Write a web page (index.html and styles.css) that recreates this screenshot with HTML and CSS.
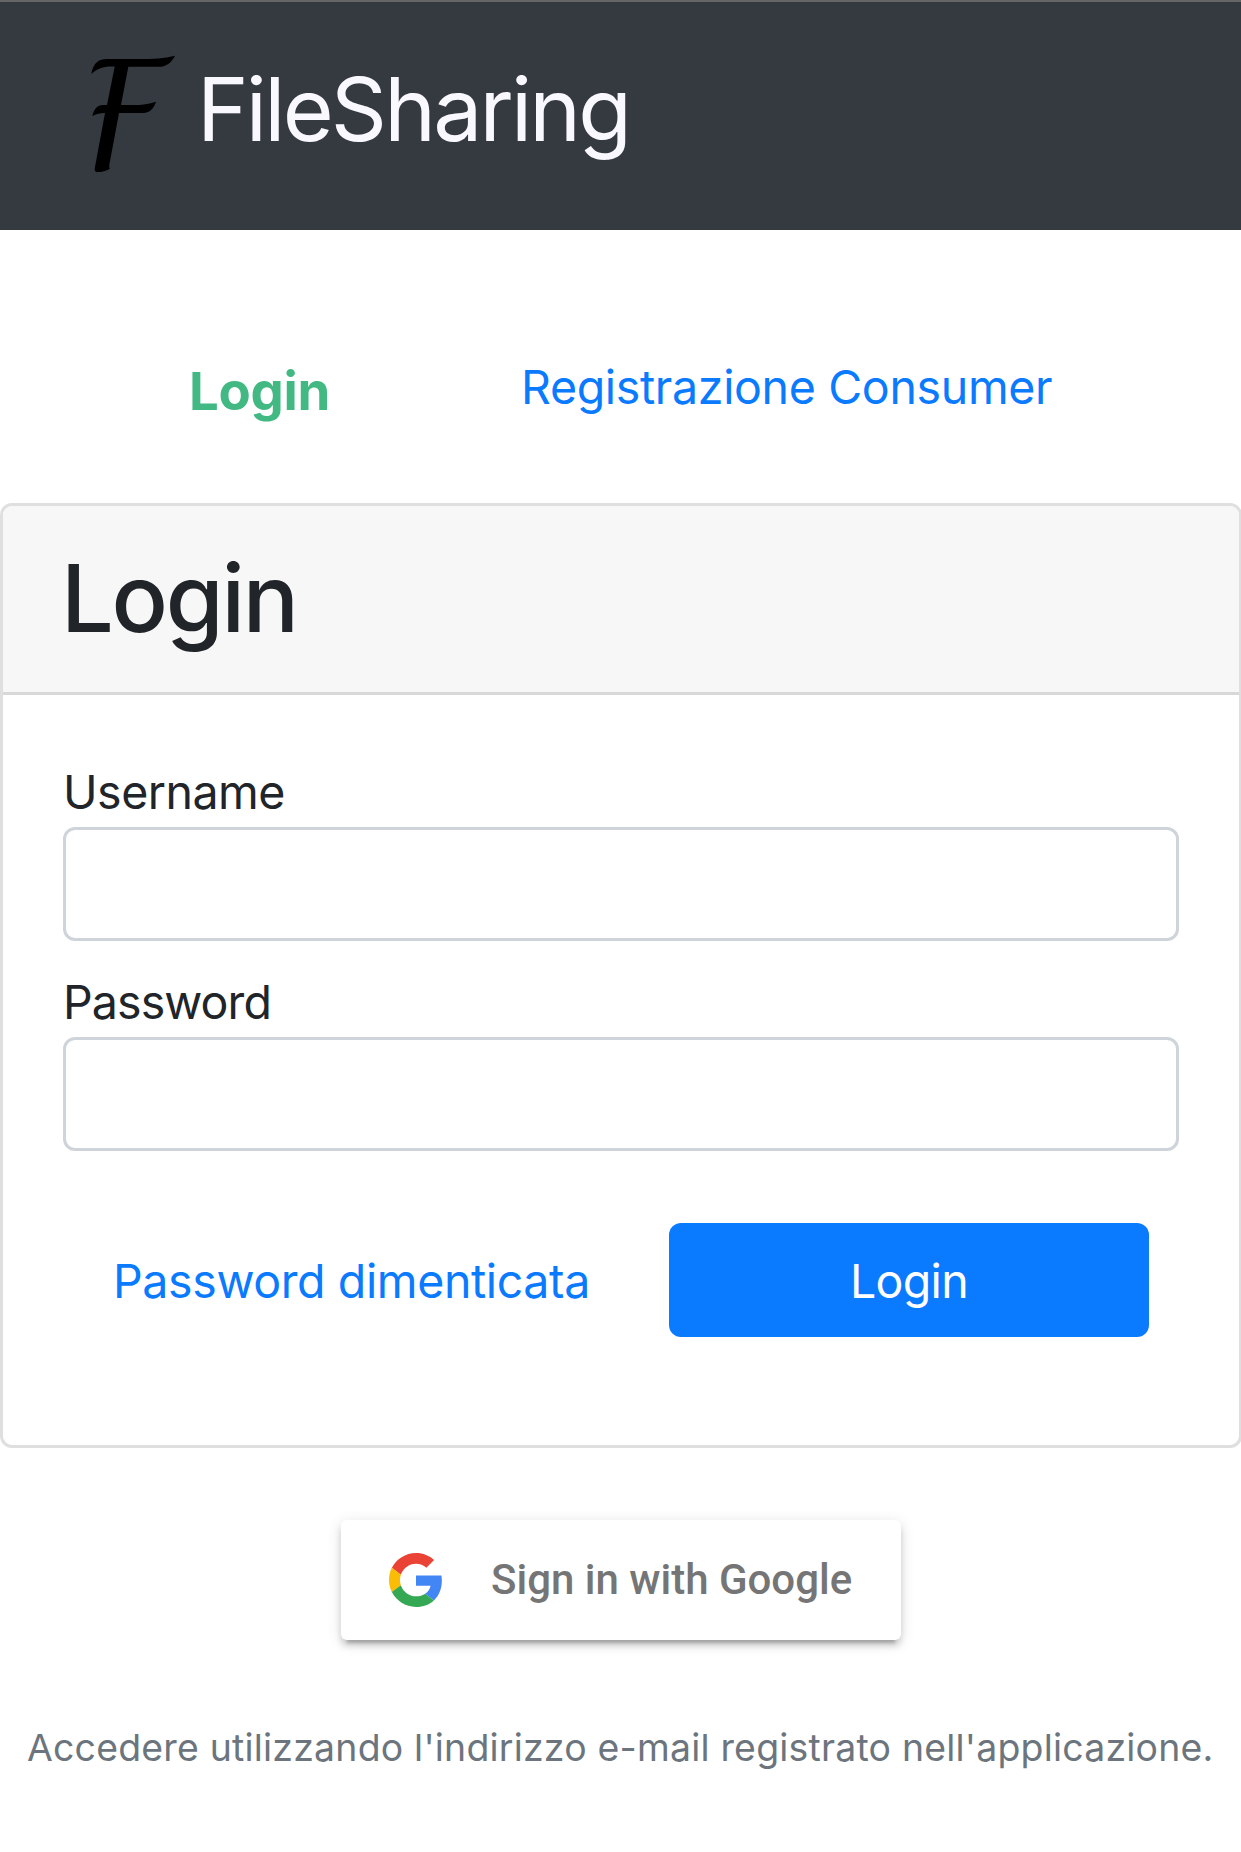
FILE: index.html
```html
<!DOCTYPE html>
<html lang="it">
<head>
<meta charset="utf-8">
<title>FileSharing</title>
<link rel="stylesheet" href="styles.css">
</head>
<body>
<header class="navbar">
  <svg class="logo" viewBox="0 0 330 450" aria-hidden="true">
    <path d="M34 102C39 76 50 60 72 58C86 56 105 57 128 57H180C218 57 252 55 285 47C277 63 264 77 244 80H145L123 195H160C186 195 208 192 228 185C223 200 214 217 192 219H117L88 374C87 379 88 383 90 386C77 393 62 397 49 396C43 394 44 388 45 381L75 219C60 219 48 222 37 228C42 211 49 198 62 196C68 195 74 195 81 195L104 80C79 79 54 83 34 102Z"/>
  </svg>
  <span class="brand">FileSharing</span>
</header>
<nav class="tabs">
  <a class="tab tab-active">Login</a>
  <a class="tab tab-link">Registrazione Consumer</a>
</nav>
<main class="card">
  <div class="card-header"><h1 class="title">Login</h1></div>
  <form class="card-body">
    <label class="label" for="username">Username</label>
    <input class="input" id="username" type="text">
    <label class="label label-password" for="password">Password</label>
    <input class="input" id="password" type="password">
    <div class="actions">
      <a class="forgot">Password dimenticata</a>
      <button class="submit" type="button">Login</button>
    </div>
  </form>
</main>
<button class="google" type="button">
  <svg class="google-icon" viewBox="0 0 48 48" aria-hidden="true">
    <path fill="#EA4335" d="M24 9.5c3.54 0 6.71 1.22 9.21 3.6l6.85-6.85C35.9 2.38 30.47 0 24 0 14.62 0 6.51 5.38 2.56 13.22l7.98 6.19C12.43 13.72 17.74 9.5 24 9.5z"/>
    <path fill="#4285F4" d="M46.98 24.55c0-1.57-.15-3.09-.38-4.55H24v9.02h12.94c-.58 2.96-2.26 5.48-4.78 7.18l7.73 6c4.51-4.18 7.09-10.36 7.09-17.65z"/>
    <path fill="#FBBC05" d="M10.53 28.59c-.48-1.45-.76-2.99-.76-4.59s.27-3.14.76-4.59l-7.98-6.19C.92 16.46 0 20.12 0 24c0 3.88.92 7.54 2.56 10.78l7.97-6.19z"/>
    <path fill="#34A853" d="M24 48c6.48 0 11.93-2.13 15.89-5.81l-7.73-6c-2.15 1.45-4.92 2.3-8.16 2.3-6.26 0-11.57-4.22-13.47-9.91l-7.98 6.19C6.51 42.62 14.62 48 24 48z"/>
  </svg>
  <span class="google-text">Sign in with Google</span>
</button>
<p class="hint">Accedere utilizzando l'indirizzo e-mail registrato nell'applicazione.</p>
</body>
</html>
```
FILE: styles.css
```css
* { box-sizing: border-box; }
body {
  margin: 0;
  height: 1852px;
  overflow: hidden;
  background: #fff;
  color: #212529;
  font-family: Inter, "Liberation Sans", sans-serif;
  font-size: 46.5px;
}
.navbar {
  display: flex;
  align-items: flex-start;
  height: 230px;
  padding: 38px 0 0 80px;
  background: #343a40;
  border-top: 2px solid #666;
}
.logo { width: 110px; height: 150px; flex: none; }
.brand {
  margin-left: 7px;
  color: #f9f8ff;
  font-size: 87.5px;
  line-height: 138px;
  letter-spacing: -2.8px;
  white-space: nowrap;
}
.tabs {
  display: flex;
  align-items: flex-start;
  height: 273px;
  padding-top: 121px;
}
.tab { line-height: 72px; white-space: nowrap; }
.tab-active {
  width: 521px;
  padding: 4px 0 0 189px;
  color: #42b983;
  font-size: 52.7px;
  font-weight: 700;
  letter-spacing: -0.3px;
}
.tab-link { color: #0a7aff; letter-spacing: -0.34px; }
.card {
  width: 1242px;
  height: 945px;
  border: 3px solid #dfdfdf;
  border-radius: 12px;
  overflow: hidden;
}
.card-header {
  height: 189px;
  padding: 36px 58px;
  background: #f7f7f7;
  border-bottom: 3px solid #d8d8d8;
}
.title {
  margin: 0;
  font-size: 93.5px;
  font-weight: 500;
  line-height: 112px;
  letter-spacing: -2.3px;
}
.card-body { padding: 60px; }
.label { display: block; height: 72px; line-height: 74px; letter-spacing: -0.5px; }
.label-password { letter-spacing: -0.9px; }
.input {
  display: block;
  width: 1116px;
  height: 114px;
  margin: 0 0 24px;
  padding: 18px 36px;
  border: 3px solid #ced4da;
  border-radius: 12px;
  background: #fff;
  font: inherit;
}
.actions {
  display: flex;
  align-items: center;
  margin-top: 72px;
  height: 114px;
  padding-left: 50px;
}
.forgot { width: 556px; padding-top: 2px; color: #0a7aff; letter-spacing: -0.38px; white-space: nowrap; }
.submit {
  width: 480px;
  height: 114px;
  padding: 2px 0 0;
  border: 0;
  border-radius: 12px;
  background: #0a7aff;
  color: #fff;
  font: inherit;
  letter-spacing: -0.7px;
}
.google {
  display: flex;
  align-items: center;
  width: 560px;
  height: 120px;
  margin: 72px 0 0 341px;
  padding: 0 0 0 48px;
  border: 0;
  border-radius: 6px;
  background: #fff;
  box-shadow: 0 9px 3px -6px rgba(0,0,0,.2), 0 6px 6px 0 rgba(0,0,0,.14), 0 3px 15px 0 rgba(0,0,0,.12);
}
.google-icon { width: 54px; height: 54px; flex: none; }
.google-text {
  margin-left: 48px;
  padding-bottom: 2px;
  color: #757575;
  font-family: Roboto, sans-serif;
  font-size: 42px;
  font-weight: 500;
  white-space: nowrap;
}
.hint {
  margin: 79px 0 0;
  padding-left: 27px;
  color: #6c757d;
  font-size: 37.4px;
  line-height: 58px;
  letter-spacing: 0.22px;
  white-space: nowrap;
}
```
